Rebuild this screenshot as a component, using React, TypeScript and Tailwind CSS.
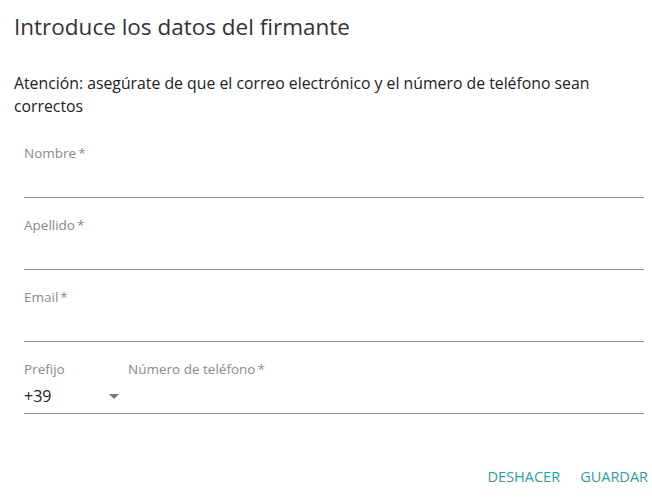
import { useState } from 'react';

interface FieldProps {
  label: string;
  required?: boolean;
}

function Field({ label, required }: FieldProps) {
  return (
    <div className="flex flex-col">
      <label className="text-[13.5px] leading-[18px] text-[#8a8a8a]">
        {label}
        {required && <span className="ml-[2px]">*</span>}
      </label>
      <div className="h-[36px] border-b border-[#949494]">
        <input className="h-full w-full bg-transparent text-[16px] text-[#222] outline-none" />
      </div>
    </div>
  );
}

export default function App() {
  const [prefix] = useState('+39');

  return (
    <div
      className="h-[498px] w-[652px] bg-white"
      style={{ fontFamily: '"Open Sans", "Noto Sans", sans-serif' }}
    >
      <div className="px-[14px] pt-[12px]">
        <h2 className="text-[22.5px] leading-[30px] text-[#333]">Introduce los datos del firmante</h2>
        <p className="mt-[30px] text-[15.8px] leading-[23px] text-[#222]">
          Atención: asegúrate de que el correo electrónico y el número de teléfono sean correctos
        </p>
      </div>

      <div className="ml-[24px] mr-[8px] mt-[26px] flex flex-col gap-[18px]">
        <Field label="Nombre" required />
        <Field label="Apellido" required />
        <Field label="Email" required />

        <div className="flex border-b border-[#949494]">
          <div className="flex w-[104px] flex-col">
            <label className="text-[13.5px] leading-[18px] text-[#8a8a8a]">Prefijo</label>
            <div className="relative h-[35px]">
              <span className="block pt-[8px] text-[16px] leading-[20px] text-[#222]">{prefix}</span>
              <svg className="absolute left-[85px] top-[16px]" width="10" height="5" viewBox="0 0 10 5">
                <path d="M0 0 L10 0 L5 5 Z" fill="#757575" />
              </svg>
            </div>
          </div>
          <div className="flex flex-1 flex-col">
            <label className="text-[13.5px] leading-[18px] text-[#8a8a8a]">
              Número de teléfono<span className="ml-[2px]">*</span>
            </label>
            <div className="h-[35px]">
              <input className="h-full w-full bg-transparent text-[16px] text-[#222] outline-none" />
            </div>
          </div>
        </div>
      </div>

      <div className="mt-[47px] flex justify-end gap-[4px]">
        <button className="px-[8px] py-[6px] text-[14.5px] uppercase leading-[20px] text-[#2b9ea2]">Deshacer</button>
        <button className="py-[6px] pl-[8px] pr-[4px] text-[14.5px] uppercase leading-[20px] text-[#2b9ea2]">Guardar</button>
      </div>
    </div>
  );
}
